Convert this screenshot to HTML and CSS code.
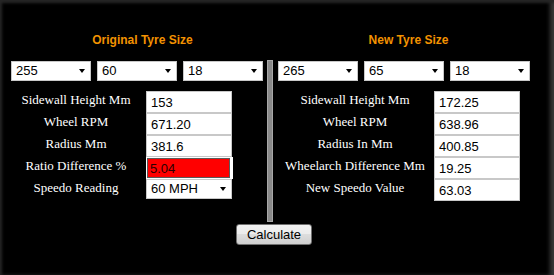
FILE: index.html
```html
<!DOCTYPE html>
<html lang="en">
<head>
    <meta charset="UTF-8">
    <meta name="viewport" content="width=device-width, initial-scale=1.0">
    <title>Tyre Size Calculator</title>
    <link rel="stylesheet" href="styles.css">
</head>
<body>
    <main class="calc">
        <div class="sides">
            <section class="side left">
                <h2>Original Tyre Size</h2>
                <div class="selects">
                    <span class="pick"><select><option>255</option></select></span>
                    <span class="pick"><select><option>60</option></select></span>
                    <span class="pick"><select><option>18</option></select></span>
                </div>
                <div class="rows">
                    <label>Sidewall Height Mm</label><input type="text" value="153">
                    <label>Wheel RPM</label><input type="text" value="671.20">
                    <label>Radius Mm</label><input type="text" value="381.6">
                    <label>Ratio Difference %</label><input type="text" class="ratio" value="5.04">
                    <label>Speedo Reading</label><span class="pick wide"><select><option>60 MPH</option></select></span>
                </div>
            </section>
            <div class="divider"></div>
            <section class="side right">
                <h2>New Tyre Size</h2>
                <div class="selects">
                    <span class="pick"><select><option>265</option></select></span>
                    <span class="pick"><select><option>65</option></select></span>
                    <span class="pick"><select><option>18</option></select></span>
                </div>
                <div class="rows">
                    <label>Sidewall Height Mm</label><input type="text" value="172.25">
                    <label>Wheel RPM</label><input type="text" value="638.96">
                    <label>Radius In Mm</label><input type="text" value="400.85">
                    <label>Wheelarch Difference Mm</label><input type="text" value="19.25">
                    <label>New Speedo Value</label><input type="text" value="63.03">
                </div>
            </section>
        </div>
        <div class="actions">
            <button type="button">Calculate</button>
        </div>
    </main>
</body>
</html>
```

FILE: styles.css
```css
*,
*::before,
*::after{
    box-sizing: border-box;
}

html, body{
    margin: 0;
    padding: 0;
    background: #000;
}

.calc{
    width: 554px;
    height: 275px;
    padding: 33px 0 0 11px;
    background: #000;
    box-shadow: inset 2px 3px 3px #262626, inset -5px 0 4px -1px #3a3a3a;
    overflow: hidden;
}

.sides{
    display: flex;
    align-items: flex-start;
}

.side{
    width: 252px;
}

.side h2{
    margin: 0 0 14px;
    font: bold 12px/14px "Liberation Sans", Arial, sans-serif;
    color: #f39200;
    text-align: center;
}
.left h2{
    padding-left: 11px;
}
.right h2{
    padding-left: 9px;
}

.selects{
    display: flex;
    gap: 6px;
    margin-bottom: 10px;
}

.pick{
    position: relative;
    display: block;
    width: 80px;
    height: 20px;
}
.pick::after{
    content: '';
    position: absolute;
    right: 6px;
    top: 8px;
    border-left: 3.5px solid transparent;
    border-right: 3.5px solid transparent;
    border-top: 4px solid #000;
    pointer-events: none;
}
.pick.wide{
    width: 86px;
}

select{
    -webkit-appearance: none;
    appearance: none;
    width: 100%;
    height: 20px;
    margin: 0;
    padding: 0 0 0 4px;
    border: 1px solid #c8c8c8;
    border-radius: 0;
    background: #fff;
    color: #000;
    font: 13px/18px "Liberation Sans", Arial, sans-serif;
}

.rows{
    display: grid;
    grid-auto-rows: 22px;
    align-items: start;
}
.left .rows{
    grid-template-columns: 130px 86px;
    column-gap: 5px;
}
.right .rows{
    grid-template-columns: 154px 86px;
    column-gap: 2px;
}

.rows label{
    padding-top: 1px;
    font: 13px/15px "Liberation Serif", "Times New Roman", serif;
    color: #fff;
    text-align: center;
    white-space: nowrap;
}

.rows input{
    width: 86px;
    height: 22px;
    margin: 0;
    padding: 1px 0 0 4px;
    border: 1px solid #c8c8c8;
    background: #fff;
    color: #000;
    font: 13px "Liberation Sans", Arial, sans-serif;
}

.rows input.ratio{
    width: 83px;
    height: 20px;
    margin: 1px 0 0 1px;
    padding-left: 2px;
    border: 1px solid #5a5a5a;
    background: #f00;
    color: #2a0000;
    box-shadow: 0 0 0 1px #fff, 2px 0 0 1px #fff;
}

.divider{
    flex: none;
    width: 6px;
    height: 162px;
    margin: 27px 0 0 4px;
    background: #8a8a8a;
    border: 1px solid #a8a8a8;
    margin-right: 5px;
}

.actions{
    padding: 2px 0 0 225px;
}

.actions button{
    width: 76px;
    height: 21px;
    padding: 0;
    border: 1px solid #707070;
    border-radius: 3px;
    background: linear-gradient(#f2f2f2, #ebebeb 50%, #dddddd 50%, #cfcfcf);
    color: #000;
    font: 13px "Liberation Sans", Arial, sans-serif;
}
```
